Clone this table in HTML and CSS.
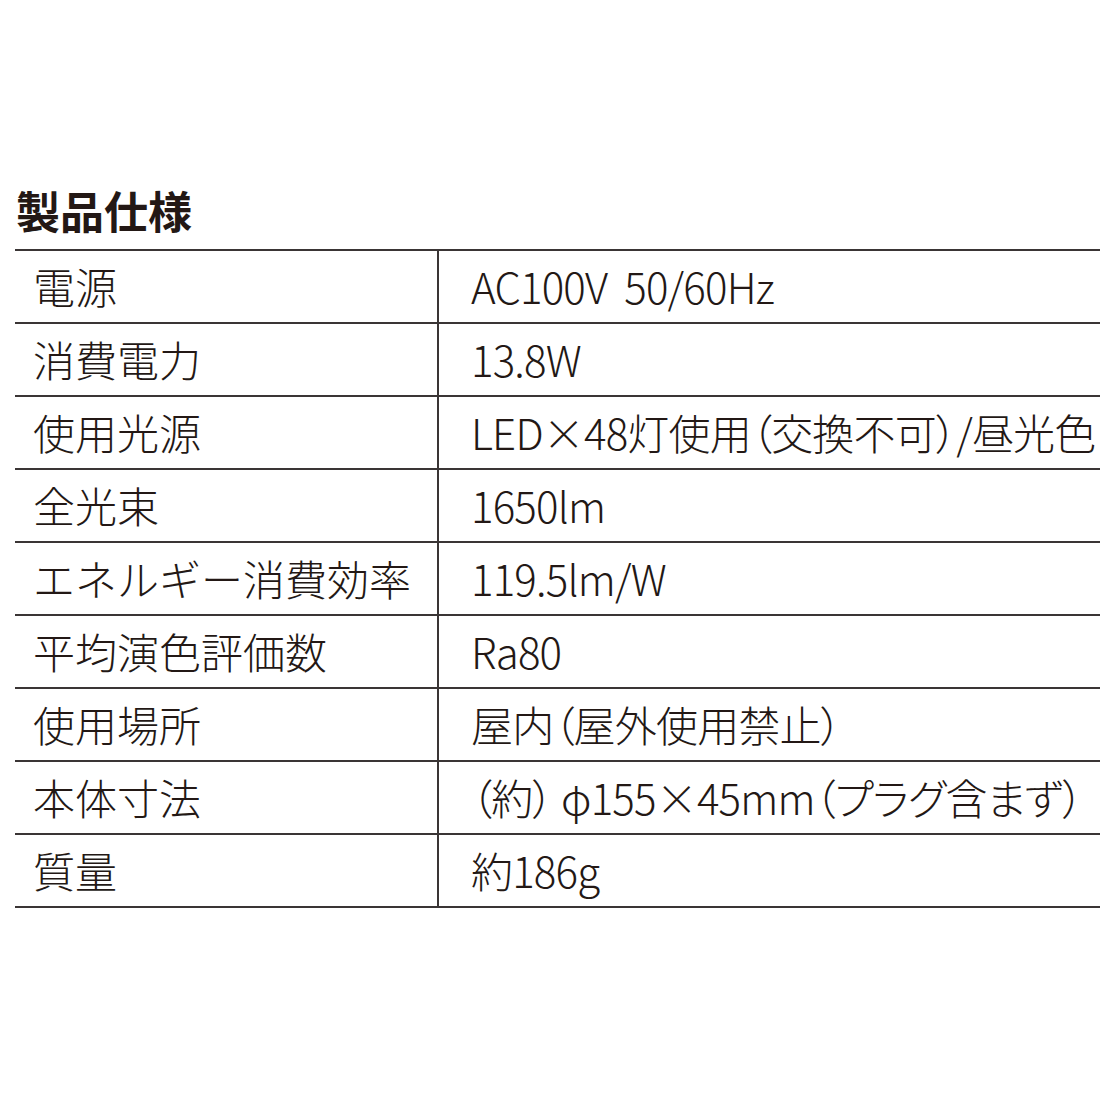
FILE: index.html
```html
<!DOCTYPE html>
<html lang="ja">
<head>
<meta charset="utf-8">
<title>製品仕様</title>
<link rel="stylesheet" href="styles.css">
</head>
<body>
<main class="page">
  <h1 class="title">製品仕様</h1>
  <div class="spec">
    <div class="row"><div class="key">電源</div><div class="val">AC100V&nbsp;&nbsp;50/60Hz</div></div>
    <div class="row"><div class="key">消費電力</div><div class="val">13.8W</div></div>
    <div class="row"><div class="key">使用光源</div><div class="val">LED×48灯使用（交換不可）/昼光色</div></div>
    <div class="row"><div class="key">全光束</div><div class="val">1650lm</div></div>
    <div class="row"><div class="key">エネルギー消費効率</div><div class="val">119.5lm/W</div></div>
    <div class="row"><div class="key">平均演色評価数</div><div class="val">Ra80</div></div>
    <div class="row"><div class="key">使用場所</div><div class="val">屋内（屋外使用禁止）</div></div>
    <div class="row"><div class="key">本体寸法</div><div class="val">（約） φ155×45mm（プラグ含まず）</div></div>
    <div class="row"><div class="key">質量</div><div class="val">約186g</div></div>
  </div>
</main>
</body>
</html>
```

FILE: styles.css
```css
html, body {
  margin: 0;
  padding: 0;
  background: #ffffff;
}
body {
  font-family: "Noto Sans CJK JP", "Noto Sans", sans-serif;
  color: #231815;
}
.page {
  padding: 182px 0 0 15px;
}
.title {
  margin: 0 0 0 1px;
  font-size: 44px;
  font-weight: 700;
  line-height: 56px;
  height: 67px;
}
.spec {
  border-top: 2px solid #3a3535;
}
.row {
  display: grid;
  grid-template-columns: 424px 1fr;
  height: 71px;
  border-bottom: 2px solid #3a3535;
}
.key, .val {
  display: flex;
  align-items: center;
  font-size: 42px;
  font-weight: 300;
  white-space: pre;
  padding-bottom: 2px;
}
.key {
  padding-left: 18px;
  border-right: 2px solid #3a3535;
}
.val {
  padding-left: 32px;
  font-feature-settings: "palt";
  letter-spacing: -0.8px;
}
```
